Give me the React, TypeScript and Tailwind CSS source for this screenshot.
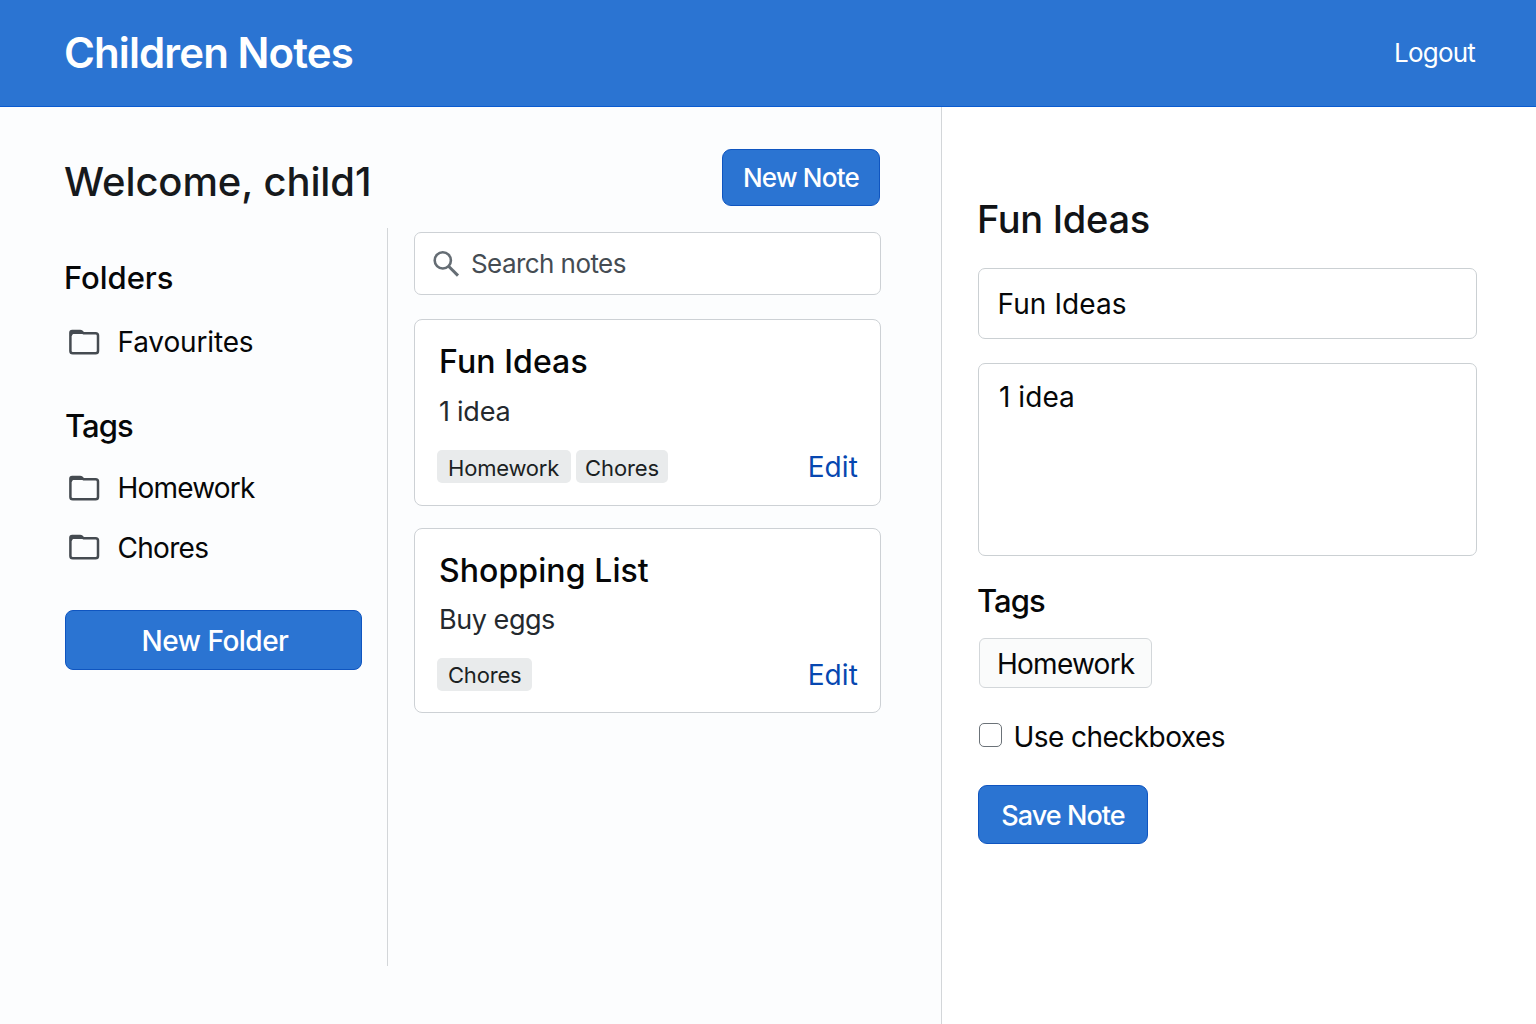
import React from 'react';

function FolderIcon({ className }: { className: string }) {
  return (
    <svg className={`ml-[3px] h-[28px] w-[32px] shrink-0 ${className}`} viewBox="0 0 32 28" fill="none">
      <path
        d="M4.2 2.9h7.9c.6 0 1.1.2 1.5.6l1.7 1.7H27.6c1.4 0 2.4 1 2.4 2.3v15.4c0 1.3-1 2.3-2.4 2.3H4.8c-1.4 0-2.4-1-2.4-2.3V4.7c0-1 .8-1.8 1.8-1.8z"
        stroke="#454b51"
        strokeWidth="2.5"
        strokeLinejoin="round"
      />
      <path d="M3 3.5h10l2.4 2.6H6c-1.2 0-1.9.6-2 1.7L3 8z" fill="#454b51" />
    </svg>
  );
}

function SearchIcon() {
  return (
    <svg className="ml-[18px] h-[28px] w-[28px] shrink-0" viewBox="0 0 28 28" fill="none" stroke="#656d74">
      <circle cx="9.8" cy="10.4" r="8.1" strokeWidth="2.6" />
      <path d="M15.6 16.2L25 25.6" strokeWidth="3" />
    </svg>
  );
}

function SideItem({ label, className, iconClass = '' }: { label: string; className: string; iconClass?: string }) {
  return (
    <li className={`flex h-10 items-center ${className}`}>
      <FolderIcon className={iconClass} />
      <span className="ml-[17.5px] text-[28px] leading-10">{label}</span>
    </li>
  );
}

type NoteProps = {
  title: string;
  titleClass: string;
  body: string;
  bodyClass: string;
  tags: { label: string; className: string }[];
  className: string;
  footerClass: string;
};

function NoteCard({ title, titleClass, body, bodyClass, tags, className, footerClass }: NoteProps) {
  return (
    <article className={`rounded-[8px] border border-[#cdd1d5] bg-white pt-[22px] pr-[22px] pl-[22px] ${className}`}>
      <h3 className={`ml-0.5 text-[32px] leading-10 font-[550] text-[#060708] ${titleClass}`}>{title}</h3>
      <p className={`ml-0.5 text-[27px] leading-9 text-[#24292e] ${bodyClass}`}>{body}</p>
      <div className={`flex h-[33px] items-center ${footerClass}`}>
        <div className="flex gap-[5px]">
          {tags.map((t) => (
            <span
              key={t.label}
              className={`flex h-[33px] items-center rounded-[5px] bg-[#e9ebec] text-[22px] leading-none text-[#1b1f23] ${t.className}`}
            >
              {t.label}
            </span>
          ))}
        </div>
        <a className="ml-auto text-[28px] leading-8 tracking-[0.1px] text-[#0747b0]">Edit</a>
      </div>
    </article>
  );
}

export default function App() {
  return (
    <div className="h-[1024px] w-[1536px] overflow-hidden bg-white font-['Inter',sans-serif] text-[#060708]">
      <header className="flex h-[107px] items-center justify-between border-b border-[#0a5bd0] bg-[#2b74d2] pr-[61px] pl-[64px] text-white">
        <h1 className="text-[42px] leading-[50px] font-semibold tracking-[-0.9px]">Children Notes</h1>
        <a className="text-[26px] leading-8 tracking-[-0.8px]">Logout</a>
      </header>

      <div className="flex h-[917px]">
        <section className="w-[942px] shrink-0 border-r border-[#d3d6d9] bg-[#fcfdfe] pt-[42px] pl-[65px]">
          <div className="flex h-[57px] w-[815px] items-start justify-between">
            <h2 className="mt-1 -ml-px text-[40px] leading-[57px] font-medium tracking-[-0.1px] text-[#16191c]">
              Welcome, child1
            </h2>
            <button className="h-[57px] w-[158px] rounded-[9px] border border-[#0f55c0] bg-[#2b74d2] text-[26px] font-medium tracking-[-0.75px] text-white">
              New Note
            </button>
          </div>

          <div className="mt-[22px] flex">
            <aside className="h-[738px] w-[323px] shrink-0 border-r border-[#d3d6d9] pt-[30px]">
              <h3 className="-ml-px text-[31px] leading-10 font-[550] tracking-[-0.05px]">Folders</h3>
              <ul>
                <SideItem label="Favourites" className="mt-6 tracking-[-0.15px]" iconClass="-mt-px" />
              </ul>
              <h3 className="mt-[44px] text-[31px] leading-10 font-[550] tracking-[-0.95px]">Tags</h3>
              <ul>
                <SideItem label="Homework" className="mt-[22px] tracking-[-0.8px]" />
                <SideItem label="Chores" className="mt-5 tracking-[-0.7px]" iconClass="-mt-0.5" />
              </ul>
              <button className="mt-[42px] h-[60px] w-[297px] rounded-[8px] border border-[#0f55c0] bg-[#2b74d2] pt-px pl-[3px] text-[28px] font-medium tracking-[-0.5px] text-white">
                New Folder
              </button>
            </aside>

            <main className="ml-[26px] w-[467px] pt-1">
              <div className="flex h-[63px] items-center rounded-[7px] border border-[#cdd1d5] bg-white">
                <SearchIcon />
                <span className="ml-[10px] text-[26px] leading-8 tracking-[-0.57px] text-[#454c53]">Search notes</span>
              </div>
              <NoteCard
                className="mt-6 h-[187px]"
                title="Fun Ideas"
                titleClass="tracking-[0.1px]"
                body="1 idea"
                bodyClass="mt-3 tracking-[-0.25px]"
                footerClass="mt-5"
                tags={[
                  { label: 'Homework', className: 'w-[134px] pt-[3px] pl-[11px] tracking-[-0.2px]' },
                  { label: 'Chores', className: 'w-[92px] pt-[3px] pl-[9px] tracking-[-0.1px]' },
                ]}
              />
              <NoteCard
                className="mt-[22px] h-[185px]"
                title="Shopping List"
                titleClass="tracking-[0.08px]"
                body="Buy eggs"
                bodyClass="mt-[11px] tracking-[-0.45px]"
                footerClass="mt-5"
                tags={[{ label: 'Chores', className: 'w-[95px] pt-px pl-[11px] tracking-[-0.2px]' }]}
              />
            </main>
          </div>
        </section>

        <section className="pt-[88px] pl-9">
          <h2 className="-ml-px text-[38px] leading-[48px] font-medium tracking-[-0.3px] text-[#111316]">Fun Ideas</h2>
          <div className="mt-[25px] flex h-[71px] w-[499px] items-center rounded-[7px] border border-[#cbd0d3] pt-px pl-[18.5px] text-[28px] tracking-[0.1px]">
            Fun Ideas
          </div>
          <div className="mt-6 h-[193px] w-[499px] rounded-[7px] border border-[#cbd0d3] pt-[13px] pl-5 text-[28px] leading-10 tracking-[0.05px]">
            1 idea
          </div>
          <h3 className="mt-[25px] -ml-px text-[31px] leading-10 font-[550] tracking-[-0.95px]">Tags</h3>
          <div className="mt-[17px] ml-px flex h-[50px] w-[173px] items-center rounded-[6px] border border-[#d3d7da] bg-[#fafbfb] pt-px pl-[17px] text-[28px] tracking-[-0.75px]">
            Homework
          </div>
          <label className="mt-[29px] flex h-10 items-center">
            <span className="mb-1 ml-px h-6 w-[23px] rounded-[5px] border-[1.5px] border-[#6b7278] bg-white" />
            <span className="ml-[11.5px] text-[28px] leading-10 tracking-[-0.55px]">Use checkboxes</span>
          </label>
          <button className="mt-7 h-[59px] w-[170px] rounded-[9px] border border-[#0f55c0] bg-[#2b74d2] pt-[3px] text-[27px] font-medium tracking-[-0.95px] text-white">
            Save Note
          </button>
        </section>
      </div>
    </div>
  );
}
